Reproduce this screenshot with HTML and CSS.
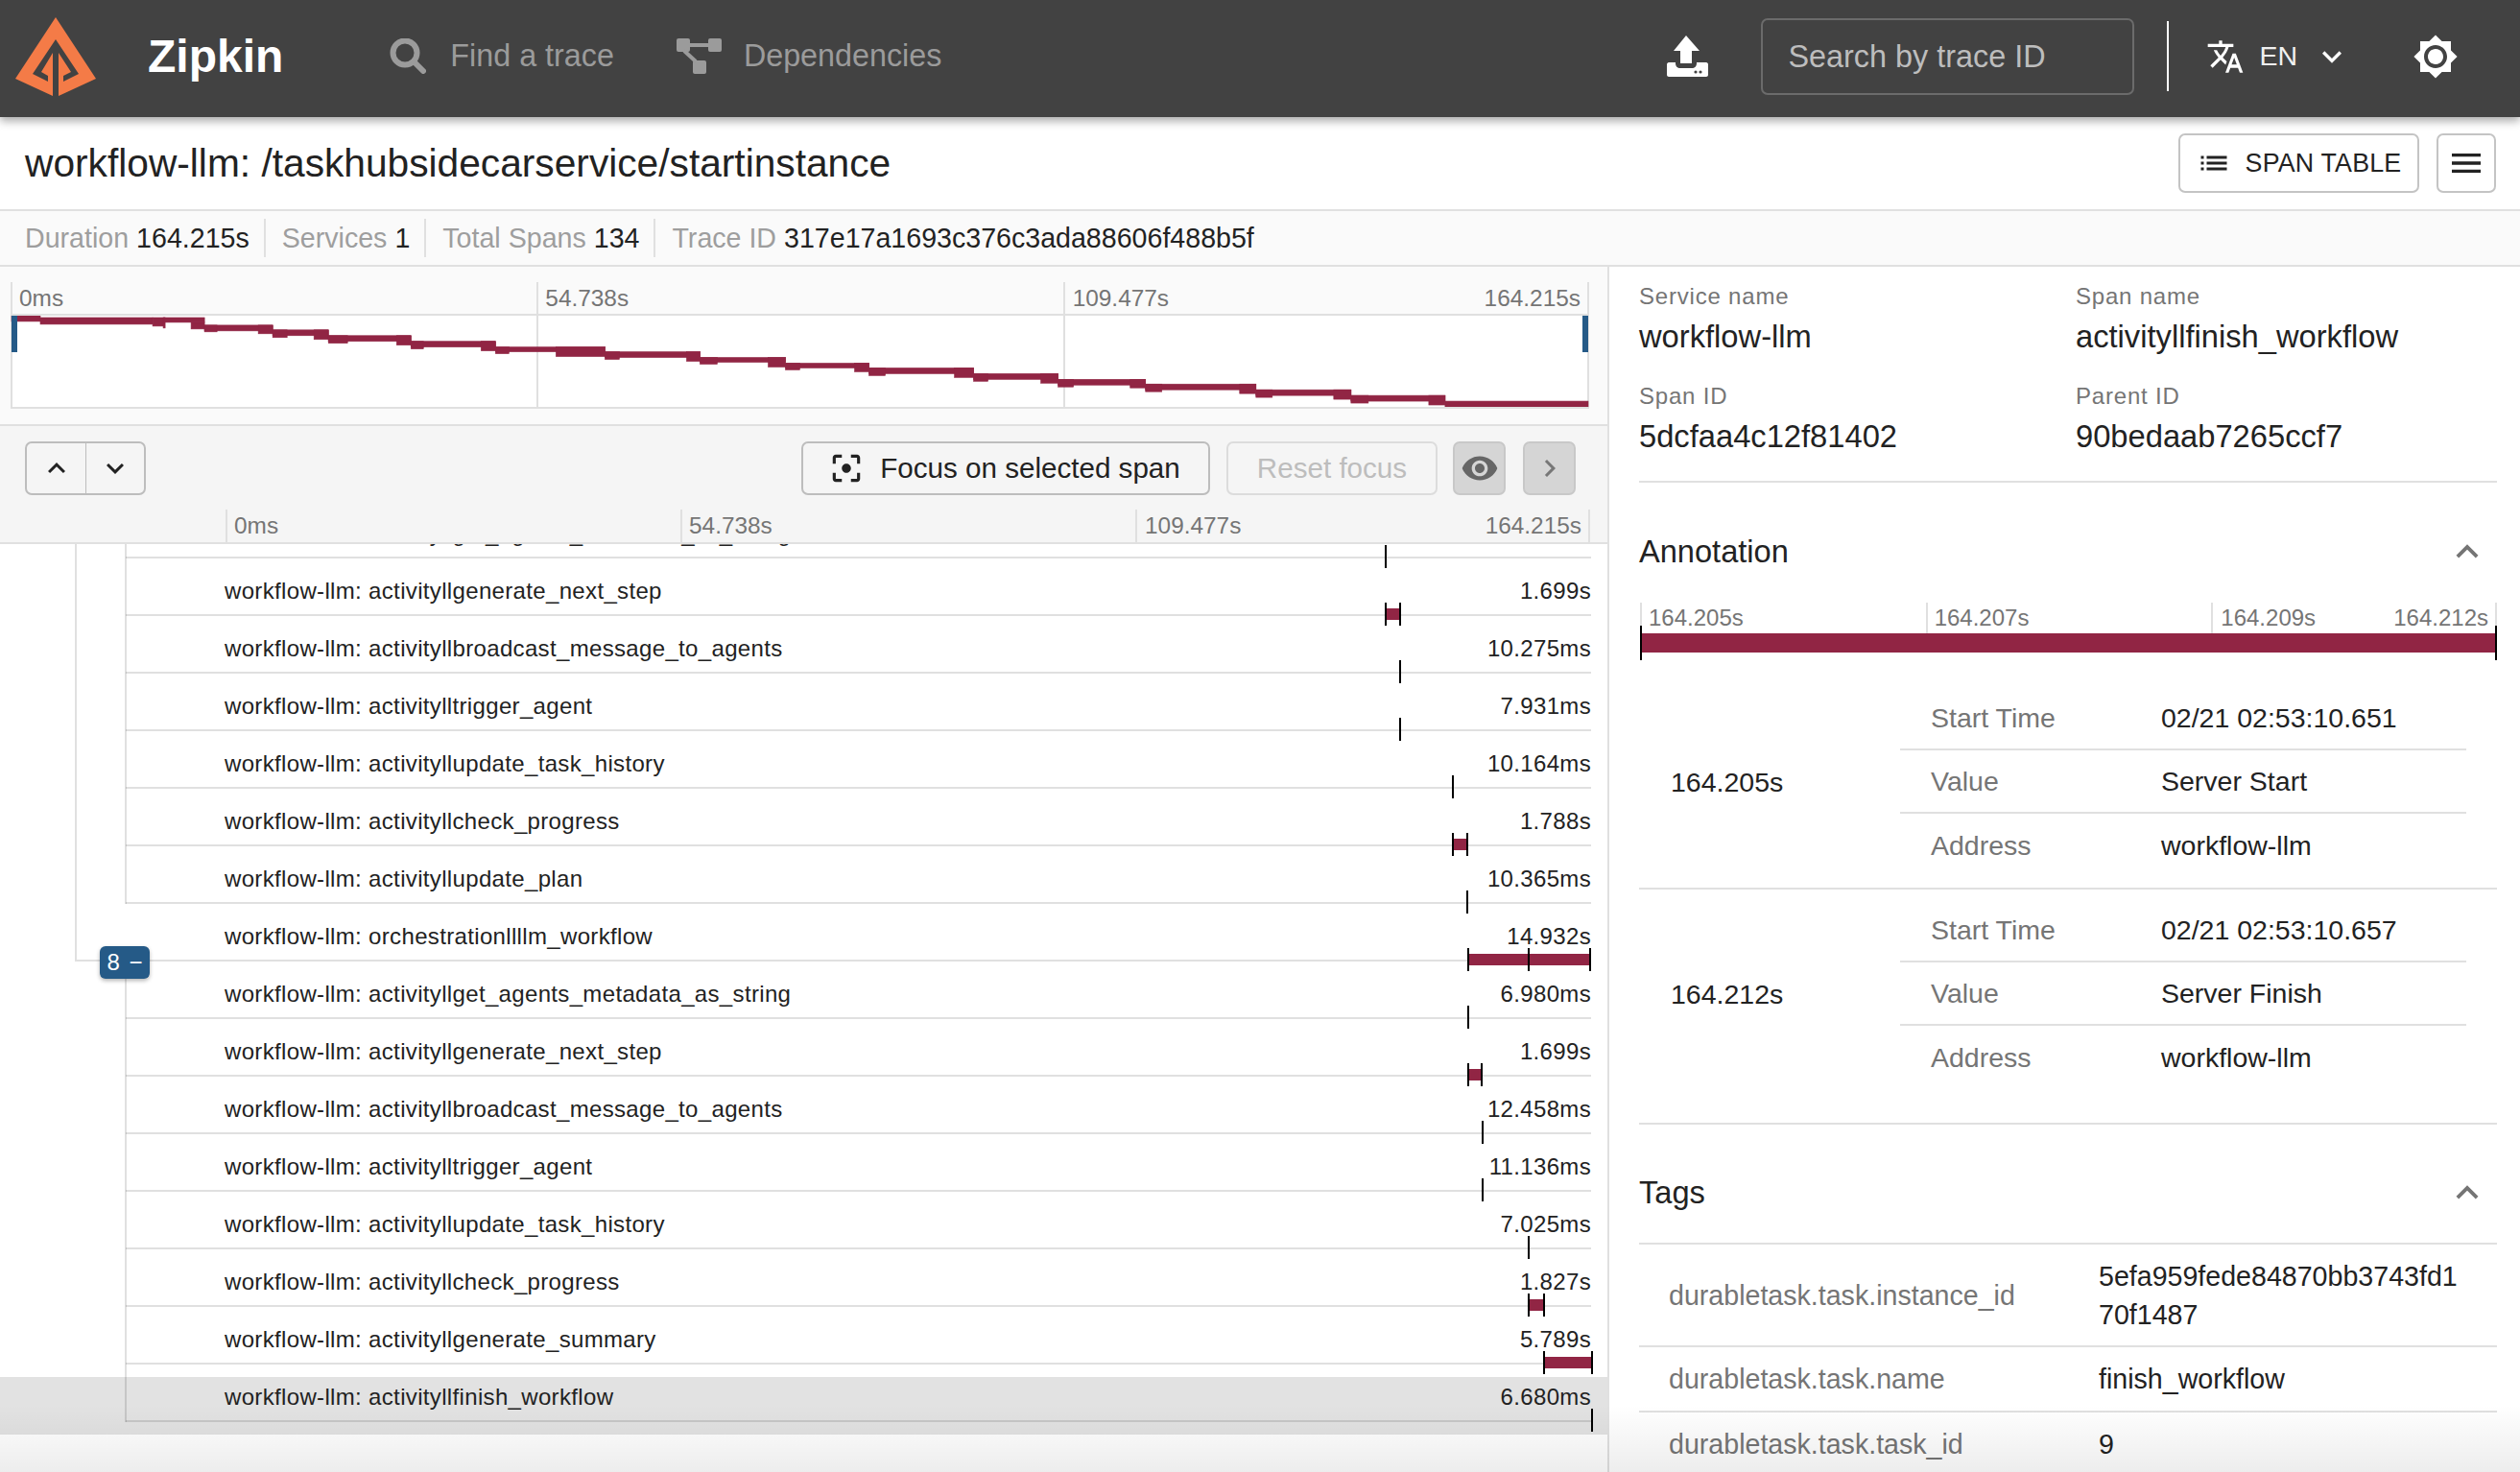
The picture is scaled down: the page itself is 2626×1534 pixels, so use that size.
FILE: index.html
```html
<!DOCTYPE html>
<html lang="en">
<head>
    <meta charset="UTF-8">
    <title>Zipkin</title>
    <link rel="stylesheet" href="styles.css">
</head>
<body>
    <header class="navbar">
        <svg class="logo" viewBox="16 17 84 82"><polygon fill="#f47b47" points="58,17 100,81 61,99 61,54 74,74 66,78 66,84 82,76 58,40 34,76 50,84 50,78 43,74 55,54 55,99 16,81"/></svg>
        <div class="brand">Zipkin</div>
        <a class="nav-link nav-find">
            <svg class="icon-search" viewBox="0 0 38 37"><circle cx="16" cy="15" r="12.5" fill="none" stroke="#9b9b9b" stroke-width="6"/><line x1="25" y1="24" x2="35" y2="34" stroke="#9b9b9b" stroke-width="6" stroke-linecap="round"/></svg>
            <span>Find a trace</span>
        </a>
        <a class="nav-link nav-deps">
            <svg class="icon-deps" viewBox="0 0 48 37"><rect x="1" y="0" width="14" height="14" rx="2" fill="#9b9b9b"/><rect x="34" y="0" width="14" height="14" rx="2" fill="#9b9b9b"/><rect x="18" y="23" width="14" height="14" rx="2" fill="#9b9b9b"/><line x1="14" y1="7" x2="35" y2="7" stroke="#9b9b9b" stroke-width="4"/><line x1="9" y1="13" x2="21" y2="24" stroke="#9b9b9b" stroke-width="4"/></svg>
            <span>Dependencies</span>
        </a>
        <div class="nav-spacer"></div>
        <svg class="icon-upload" viewBox="0 0 43 43"><path fill="#fff" d="M20 0 L34 16 H26 V29 H14 V16 H7 Z"/><path fill="#fff" d="M2 28 H9 V29 C9 32 11 34 14 34 H26 C29 34 31 32 31 29 V28 H41 C42 28 43 29 43 30 V41 C43 42 42 43 41 43 H2 C1 43 0 42 0 41 V30 C0 29 1 28 2 28 Z"/><circle cx="30" cy="38" r="1.6" fill="#424242"/><circle cx="35" cy="38" r="1.6" fill="#424242"/></svg>
        <div class="search-box">Search by trace ID</div>
        <div class="nav-divider"></div>
        <svg class="icon-translate" viewBox="0 0 24 24"><path fill="#fff" d="M12.87 15.07l-2.54-2.51.03-.03c1.74-1.94 2.98-4.17 3.71-6.53H17V4h-7V2H8v2H1v1.99h11.17C11.5 7.92 10.44 9.75 9 11.35 8.07 10.32 7.3 9.19 6.69 8h-2c.73 1.63 1.73 3.17 2.98 4.56l-5.09 5.02L4 19l5-5 3.11 3.11.76-2.04zM18.5 10h-2L12 22h2l1.12-3h4.75L21 22h2l-4.5-12zm-2.62 7l1.62-4.33L19.12 17h-3.24z"/></svg>
        <span class="lang">EN</span>
        <svg class="icon-lang-more" viewBox="0 0 24 24"><path fill="#fff" d="M16.59 8.59L12 13.17 7.41 8.59 6 10l6 6 6-6z"/></svg>
        <svg class="icon-theme" viewBox="0 0 24 24"><path fill="#fff" d="M20 8.69V4h-4.69L12 .69 8.69 4H4v4.69L.69 12 4 15.31V20h4.69L12 23.31 15.31 20H20v-4.69L23.31 12 20 8.69zM12 18c-3.31 0-6-2.69-6-6s2.69-6 6-6 6 2.69 6 6-2.69 6-6 6zm0-10c-2.21 0-4 1.79-4 4s1.79 4 4 4 4-1.79 4-4-1.79-4-4-4z"/></svg>
    </header>

    <div class="title-row">
        <h1 class="trace-title">workflow-llm: /taskhubsidecarservice/startinstance</h1>
        <button class="btn btn-table">
            <svg class="icon-list" viewBox="0 0 24 24"><path fill="#222" d="M3 13h2v-2H3v2zm0 4h2v-2H3v2zm0-8h2V7H3v2zm4 4h14v-2H7v2zm0 4h14v-2H7v2zM7 7v2h14V7H7z"/></svg>
            SPAN TABLE
        </button>
        <button class="btn btn-menu">
            <svg class="icon-menu" viewBox="0 0 24 24"><path fill="#222" d="M3 18h18v-2H3v2zm0-5h18v-2H3v2zm0-7v2h18V6H3z"/></svg>
        </button>
    </div>

    <div class="info-row">
        <div class="info-item"><span class="info-label">Duration</span> 164.215s</div>
        <div class="info-item"><span class="info-label">Services</span> 1</div>
        <div class="info-item"><span class="info-label">Total Spans</span> 134</div>
        <div class="info-item"><span class="info-label">Trace ID</span> 317e17a1693c376c3ada88606f488b5f</div>
    </div>

    <main class="main">
        <section class="left-panel">
            <div class="minimap-wrap">
                <div class="minimap">
                    <div class="ticks mini-labels">
                        <div class="tick-cell">0ms</div>
                        <div class="tick-cell">54.738s</div>
                        <div class="tick-cell tick-last"><span>109.477s</span><span>164.215s</span></div>
                    </div>
                    <div class="mini-plot">
                        <div class="ticks mini-ticks">
                            <div class="tick-cell"></div>
                            <div class="tick-cell"></div>
                            <div class="tick-cell tick-last"></div>
                        </div>
                        <svg class="mini-spans" viewBox="12 328 1644 96" preserveAspectRatio="none">
                            <g fill="#912544" stroke="#912544" stroke-width="0.6">
                                <rect x="13" y="328" width="30" height="6"/>
                                <rect x="43" y="330" width="117" height="7"/>
                                <rect x="160" y="330" width="12" height="9"/>
                                <rect x="171" y="330" width="2" height="11"/>
                                <rect x="172" y="330" width="42" height="5"/>
                                <rect x="200" y="335" width="14" height="7"/>
                                <rect x="214" y="338" width="71" height="6"/>
                                <rect x="214" y="338" width="13" height="7"/>
                                <rect x="270" y="338" width="15" height="9"/>
                                <rect x="285" y="343" width="58" height="6"/>
                                <rect x="285" y="343" width="15" height="8"/>
                                <rect x="328" y="343" width="15" height="10"/>
                                <rect x="343" y="349" width="86" height="6"/>
                                <rect x="343" y="349" width="20" height="8"/>
                                <rect x="414" y="349" width="15" height="10"/>
                                <rect x="429" y="355" width="88" height="6"/>
                                <rect x="429" y="355" width="13" height="8"/>
                                <rect x="502" y="355" width="15" height="10"/>
                                <rect x="517" y="361" width="114" height="5"/>
                                <rect x="517" y="361" width="14" height="7"/>
                                <rect x="580" y="361" width="51" height="10"/>
                                <rect x="631" y="366" width="99" height="6"/>
                                <rect x="631" y="366" width="15" height="8"/>
                                <rect x="716" y="366" width="14" height="10"/>
                                <rect x="730" y="372" width="89" height="5"/>
                                <rect x="730" y="372" width="18" height="7"/>
                                <rect x="801" y="372" width="18" height="10"/>
                                <rect x="819" y="378" width="87" height="5"/>
                                <rect x="819" y="378" width="15" height="7"/>
                                <rect x="891" y="378" width="15" height="9"/>
                                <rect x="906" y="383" width="109" height="6"/>
                                <rect x="906" y="383" width="17" height="8"/>
                                <rect x="995" y="383" width="20" height="10"/>
                                <rect x="1015" y="389" width="88" height="6"/>
                                <rect x="1015" y="389" width="15" height="8"/>
                                <rect x="1085" y="389" width="18" height="10"/>
                                <rect x="1103" y="395" width="91" height="6"/>
                                <rect x="1103" y="395" width="16" height="8"/>
                                <rect x="1178" y="395" width="16" height="9"/>
                                <rect x="1194" y="400" width="115" height="6"/>
                                <rect x="1194" y="400" width="17" height="8"/>
                                <rect x="1292" y="400" width="17" height="10"/>
                                <rect x="1309" y="406" width="99" height="6"/>
                                <rect x="1309" y="406" width="17" height="8"/>
                                <rect x="1390" y="406" width="18" height="10"/>
                                <rect x="1408" y="412" width="98" height="6"/>
                                <rect x="1408" y="412" width="18" height="8"/>
                                <rect x="1489" y="412" width="17" height="10"/>
                                <rect x="1506" y="418" width="149" height="6"/>
                            </g>
                        </svg>
                        <div class="mini-handle mini-handle-left"></div>
                        <div class="mini-handle mini-handle-right"></div>
                    </div>
                </div>
            </div>

            <div class="toolbar">
                <div class="arrow-group">
                    <button class="arrow-btn"><svg viewBox="0 0 24 24"><path fill="#222" d="M12 8l-6 6 1.41 1.41L12 10.83l4.59 4.58L18 14z"/></svg></button>
                    <button class="arrow-btn"><svg viewBox="0 0 24 24"><path fill="#222" d="M16.59 8.59L12 13.17 7.41 8.59 6 10l6 6 6-6z"/></svg></button>
                </div>
                <div class="toolbar-actions">
                    <button class="btn btn-focus">
                        <svg class="icon-focus" viewBox="0 0 24 24"><path fill="#222" d="M5 15H3v4c0 1.1.9 2 2 2h4v-2H5v-4zM5 5h4V3H5c-1.1 0-2 .9-2 2v4h2V5zm14-2h-4v2h4v4h2V5c0-1.1-.9-2-2-2zm0 16h-4v2h4c1.1 0 2-.9 2-2v-4h-2v4zM12 9c-1.66 0-3 1.34-3 3s1.34 3 3 3 3-1.34 3-3-1.34-3-3-3z"/></svg>
                        Focus on selected span
                    </button>
                    <button class="btn btn-reset">Reset focus</button>
                    <button class="btn btn-square"><svg viewBox="0 0 24 24"><path fill="#666" d="M12 4.5C7 4.5 2.73 7.61 1 12c1.73 4.39 6 7.5 11 7.5s9.27-3.11 11-7.5c-1.73-4.39-6-7.5-11-7.5zM12 17c-2.76 0-5-2.24-5-5s2.24-5 5-5 5 2.24 5 5-2.24 5-5 5zm0-8c-1.66 0-3 1.34-3 3s1.34 3 3 3 3-1.34 3-3-1.34-3-3-3z"/></svg></button>
                    <button class="btn btn-square btn-chev"><svg viewBox="0 0 24 24"><path fill="#777" d="M10 6L8.59 7.41 13.17 12l-4.58 4.59L10 18l6-6z"/></svg></button>
                </div>
            </div>

            <div class="ticks span-ruler">
                <div class="tick-cell">0ms</div>
                <div class="tick-cell">54.738s</div>
                <div class="tick-cell tick-last"><span>109.477s</span><span>164.215s</span></div>
            </div>

            <div class="rows">
                <div class="span-row row-clipped">
                    <div class="row-label"><span>workflow-llm: activityllget_agents_metadata_as_string</span></div>
                    <div class="row-track"><i class="tick" style="left:84.9%"></i></div>
                </div>
                <div class="span-row">
                    <div class="row-label"><span>workflow-llm: activityllgenerate_next_step</span><span>1.699s</span></div>
                    <div class="row-track"><i class="bar" style="left:84.9%;width:1.05%"></i><i class="tick" style="left:84.9%"></i><i class="tick" style="left:85.95%"></i></div>
                </div>
                <div class="span-row">
                    <div class="row-label"><span>workflow-llm: activityllbroadcast_message_to_agents</span><span>10.275ms</span></div>
                    <div class="row-track"><i class="tick" style="left:85.96%"></i></div>
                </div>
                <div class="span-row">
                    <div class="row-label"><span>workflow-llm: activitylltrigger_agent</span><span>7.931ms</span></div>
                    <div class="row-track"><i class="tick" style="left:85.96%"></i></div>
                </div>
                <div class="span-row">
                    <div class="row-label"><span>workflow-llm: activityllupdate_task_history</span><span>10.164ms</span></div>
                    <div class="row-track"><i class="tick" style="left:89.82%"></i></div>
                </div>
                <div class="span-row">
                    <div class="row-label"><span>workflow-llm: activityllcheck_progress</span><span>1.788s</span></div>
                    <div class="row-track"><i class="bar" style="left:89.82%;width:1.05%"></i><i class="tick" style="left:89.82%"></i><i class="tick" style="left:90.87%"></i></div>
                </div>
                <div class="span-row">
                    <div class="row-label"><span>workflow-llm: activityllupdate_plan</span><span>10.365ms</span></div>
                    <div class="row-track"><i class="tick" style="left:90.87%"></i></div>
                </div>
                <div class="span-row">
                    <div class="row-label"><span>workflow-llm: orchestrationllllm_workflow</span><span>14.932s</span></div>
                    <div class="row-track"><i class="bar" style="left:90.94%;width:8.92%"></i><i class="tick" style="left:90.94%"></i><i class="tick" style="left:95.37%"></i><i class="tick" style="left:99.86%"></i></div>
                </div>
                <div class="span-row">
                    <div class="row-label"><span>workflow-llm: activityllget_agents_metadata_as_string</span><span>6.980ms</span></div>
                    <div class="row-track"><i class="tick" style="left:90.94%"></i></div>
                </div>
                <div class="span-row">
                    <div class="row-label"><span>workflow-llm: activityllgenerate_next_step</span><span>1.699s</span></div>
                    <div class="row-track"><i class="bar" style="left:90.94%;width:.98%"></i><i class="tick" style="left:90.94%"></i><i class="tick" style="left:91.92%"></i></div>
                </div>
                <div class="span-row">
                    <div class="row-label"><span>workflow-llm: activityllbroadcast_message_to_agents</span><span>12.458ms</span></div>
                    <div class="row-track"><i class="tick" style="left:91.99%"></i></div>
                </div>
                <div class="span-row">
                    <div class="row-label"><span>workflow-llm: activitylltrigger_agent</span><span>11.136ms</span></div>
                    <div class="row-track"><i class="tick" style="left:91.99%"></i></div>
                </div>
                <div class="span-row">
                    <div class="row-label"><span>workflow-llm: activityllupdate_task_history</span><span>7.025ms</span></div>
                    <div class="row-track"><i class="tick" style="left:95.37%"></i></div>
                </div>
                <div class="span-row">
                    <div class="row-label"><span>workflow-llm: activityllcheck_progress</span><span>1.827s</span></div>
                    <div class="row-track"><i class="bar" style="left:95.37%;width:1.12%"></i><i class="tick" style="left:95.37%"></i><i class="tick" style="left:96.49%"></i></div>
                </div>
                <div class="span-row">
                    <div class="row-label"><span>workflow-llm: activityllgenerate_summary</span><span>5.789s</span></div>
                    <div class="row-track"><i class="bar" style="left:96.49%;width:3.51%"></i><i class="tick" style="left:96.49%"></i><i class="tick" style="left:100%"></i></div>
                </div>
                <div class="span-row row-selected">
                    <div class="row-label"><span>workflow-llm: activityllfinish_workflow</span><span>6.680ms</span></div>
                    <div class="row-track"><i class="tick" style="left:100%"></i></div>
                </div>

                <div class="tree tree-outer"></div>
                <div class="tree tree-branch"></div>
                <div class="tree tree-upper"></div>
                <div class="tree tree-lower"></div>
                <div class="collapse-badge">8 −</div>
            </div>
        </section>

        <aside class="right-panel">
            <div class="span-meta">
                <div class="meta-item"><div class="meta-label">Service name</div><div class="meta-value">workflow-llm</div></div>
                <div class="meta-item"><div class="meta-label">Span name</div><div class="meta-value">activityllfinish_workflow</div></div>
                <div class="meta-item"><div class="meta-label">Span ID</div><div class="meta-value">5dcfaa4c12f81402</div></div>
                <div class="meta-item"><div class="meta-label">Parent ID</div><div class="meta-value">90bedaab7265ccf7</div></div>
            </div>

            <div class="section annotation">
                <div class="section-head">
                    <span>Annotation</span>
                    <svg class="icon-collapse" viewBox="0 0 24 24"><path fill="#757575" d="M12 8l-6 6 1.41 1.41L12 10.83l4.59 4.58L18 14z"/></svg>
                </div>
                <div class="ann-timeline">
                    <div class="ticks ann-labels">
                        <div class="tick-cell">164.205s</div>
                        <div class="tick-cell">164.207s</div>
                        <div class="tick-cell tick-last"><span>164.209s</span><span>164.212s</span></div>
                    </div>
                    <div class="ann-bar"></div>
                    <i class="ann-end ann-end-left"></i>
                    <i class="ann-end ann-end-right"></i>
                </div>

                <div class="ann-group ann-first">
                    <div class="ann-time">164.205s</div>
                    <div class="ann-table">
                        <div class="ann-row"><span class="ann-key">Start Time</span><span>02/21 02:53:10.651</span></div>
                        <div class="ann-row"><span class="ann-key">Value</span><span>Server Start</span></div>
                        <div class="ann-row"><span class="ann-key">Address</span><span>workflow-llm</span></div>
                    </div>
                </div>
                <div class="ann-group ann-second">
                    <div class="ann-time">164.212s</div>
                    <div class="ann-table">
                        <div class="ann-row"><span class="ann-key">Start Time</span><span>02/21 02:53:10.657</span></div>
                        <div class="ann-row"><span class="ann-key">Value</span><span>Server Finish</span></div>
                        <div class="ann-row"><span class="ann-key">Address</span><span>workflow-llm</span></div>
                    </div>
                </div>
            </div>

            <div class="section tags">
                <div class="section-head tags-head">
                    <span>Tags</span>
                    <svg class="icon-collapse" viewBox="0 0 24 24"><path fill="#757575" d="M12 8l-6 6 1.41 1.41L12 10.83l4.59 4.58L18 14z"/></svg>
                </div>
                <div class="tag-row"><span class="tag-key">durabletask.task.instance_id</span><span class="tag-value">5efa959fede84870bb3743fd170f1487</span></div>
                <div class="tag-row"><span class="tag-key">durabletask.task.name</span><span class="tag-value">finish_workflow</span></div>
                <div class="tag-row"><span class="tag-key">durabletask.task.task_id</span><span class="tag-value">9</span></div>
            </div>
        </aside>
    </main>

    <div class="bottom-fade"></div>
</body>
</html>
```

FILE: styles.css
```css
* {
    margin: 0;
    padding: 0;
    box-sizing: border-box;
}

html, body {
    height: 100%;
    overflow: hidden;
}

body {
    display: flex;
    flex-direction: column;
    position: relative;
    font-family: "Liberation Sans", Arial, sans-serif;
    color: #222;
    background-color: white;
}

svg {
    display: block;
    flex-shrink: 0;
}

/* top bar */
.navbar {
    height: 122px;
    flex-shrink: 0;
    display: flex;
    align-items: center;
    padding-bottom: 5px;
    background-color: #424242;
    box-shadow: 0 4px 9px rgba(0,0,0,0.35);
    position: relative;
    z-index: 2;
}

.logo {
    width: 84px;
    height: 82px;
    margin-left: 16px;
}

.brand {
    margin-left: 54px;
    font-size: 48px;
    font-weight: bold;
    color: white;
}

.nav-link {
    display: flex;
    align-items: center;
    font-size: 32.3px;
    color: #9b9b9b;
}

.nav-find {
    margin-left: 111px;
    gap: 25px;
}

.nav-deps {
    margin-left: 64px;
    gap: 23px;
}

.icon-search {
    width: 38px;
    height: 37px;
}

.icon-deps {
    width: 48px;
    height: 37px;
}

.nav-spacer {
    flex: 1;
}

.icon-upload {
    width: 43px;
    height: 43px;
}

.search-box {
    width: 389px;
    height: 80px;
    margin-left: 55px;
    padding-left: 26px;
    border: 2px solid #6b6b6b;
    border-radius: 7px;
    font-size: 32.4px;
    line-height: 76px;
    color: #bdbdbd;
}

.nav-divider {
    width: 2px;
    height: 73px;
    margin-left: 34px;
    background-color: white;
}

.icon-translate {
    width: 40px;
    height: 40px;
    margin-left: 39px;
}

.lang {
    margin-left: 15px;
    font-size: 28.5px;
    color: #f0f0f0;
}

.icon-lang-more {
    width: 40px;
    height: 40px;
    margin-left: 16px;
}

.icon-theme {
    width: 48px;
    height: 48px;
    margin-left: 64px;
    margin-right: 64px;
}

/* title */
.title-row {
    height: 98px;
    flex-shrink: 0;
    display: flex;
    align-items: center;
    padding: 0 25px 0 26px;
    border-bottom: 2px solid #e0e0e0;
}

.trace-title {
    flex: 1;
    font-size: 40.7px;
    font-weight: normal;
}

.btn {
    display: flex;
    align-items: center;
    justify-content: center;
    height: 62px;
    font-family: inherit;
    color: #222;
    background-color: transparent;
    border: 2px solid #c4c4c4;
    border-radius: 7px;
}

.btn-table {
    width: 251px;
    gap: 15px;
    font-size: 26.8px;
    letter-spacing: 0.2px;
}

.icon-list {
    width: 36px;
    height: 36px;
}

.btn-menu {
    width: 62px;
    margin-left: 18px;
}

.icon-menu {
    width: 40px;
    height: 40px;
}

/* trace info */
.info-row {
    height: 58px;
    flex-shrink: 0;
    display: flex;
    align-items: center;
    padding-left: 26px;
    background-color: #fafafa;
    border-bottom: 2px solid #e0e0e0;
    font-size: 28.6px;
}

.info-item {
    display: flex;
    align-items: center;
    gap: 8px;
    height: 40px;
    padding-right: 15px;
    margin-right: 17px;
    border-right: 2px solid #e0e0e0;
}

.info-item:last-child {
    border-right: none;
}

.info-label {
    color: #9e9e9e;
}

.main {
    flex: 1;
    min-height: 0;
    display: flex;
}

.left-panel {
    width: 1677px;
    flex-shrink: 0;
    display: flex;
    flex-direction: column;
    border-right: 2px solid #e0e0e0;
}

/* shared ruler */
.ticks {
    display: grid;
    grid-template-columns: repeat(3, 1fr);
    font-size: 24.4px;
    color: #757575;
}

.tick-cell {
    padding-left: 7px;
    border-left: 2px solid #e0e0e0;
}

.tick-last {
    display: flex;
    justify-content: space-between;
    padding-left: 8px;
    padding-right: 7px;
    border-right: 2px solid #e0e0e0;
}

/* minimap */
.minimap-wrap {
    height: 166px;
    flex-shrink: 0;
    padding: 16px 19px 0 11px;
    background-color: #fafafa;
    border-bottom: 2px solid #e0e0e0;
}

.minimap {
    height: 132px;
}

.mini-labels {
    height: 35px;
    line-height: 33px;
    border-bottom: 2px solid #e0e0e0;
}

.mini-plot {
    height: 97px;
    position: relative;
    background-color: white;
    border-bottom: 2px solid #e0e0e0;
}

.mini-ticks {
    height: 100%;
}

.mini-spans {
    position: absolute;
    left: 0;
    top: 0;
    width: 100%;
    height: 100%;
}

.mini-handle {
    position: absolute;
    top: 0;
    width: 6px;
    height: 38px;
    background-color: #255a87;
}

.mini-handle-left {
    left: 1px;
}

.mini-handle-right {
    right: 1px;
}

/* toolbar */
.toolbar {
    height: 87px;
    flex-shrink: 0;
    display: flex;
    align-items: flex-start;
    justify-content: space-between;
    padding: 16px 33px 0 26px;
    background-color: #f5f5f5;
}

.arrow-group {
    display: flex;
    height: 56px;
    border: 2px solid #bdbdbd;
    border-radius: 7px;
}

.arrow-btn {
    width: 61px;
    display: flex;
    align-items: center;
    justify-content: center;
    background: none;
    border: none;
}

.arrow-btn + .arrow-btn {
    border-left: 1px solid #bdbdbd;
}

.arrow-btn svg {
    width: 36px;
    height: 36px;
}

.toolbar-actions {
    display: flex;
}

.toolbar-actions .btn {
    height: 56px;
    font-size: 29.6px;
}

.btn-focus {
    width: 426px;
    margin-right: 17px;
    padding-right: 3px;
    gap: 16px;
    border-color: #bdbdbd;
}

.icon-focus {
    width: 38px;
    height: 38px;
}

.btn-reset {
    width: 220px;
    margin-right: 16px;
    color: #bdbdbd;
    border-color: #dcdcdc;
}

.btn-square {
    width: 55px;
    background-color: #d5d5d5;
    border-color: #c8c8c8;
}

.btn-chev {
    margin-left: 18px;
}

.btn-square svg {
    width: 40px;
    height: 40px;
}

.btn-chev svg {
    width: 36px;
    height: 36px;
}

.span-ruler {
    height: 34px;
    flex-shrink: 0;
    padding: 0 18px 0 235px;
    line-height: 33px;
    background-color: #f5f5f5;
    border-bottom: 2px solid #e0e0e0;
    box-sizing: content-box;
}

/* span rows */
.rows {
    flex: 1;
    min-height: 0;
    position: relative;
    overflow: hidden;
    background-color: white;
}

.span-row {
    height: 60px;
    position: relative;
    font-size: 24px;
    letter-spacing: 0.34px;
}

.row-clipped {
    margin-top: -32px;
}

.row-selected {
    background-color: #e2e2e2;
}

.row-label {
    height: 47px;
    display: flex;
    justify-content: space-between;
    align-items: center;
    margin: 0 17px 0 131px;
    padding: 0 0 3px 103px;
    border-bottom: 2px solid rgba(0,0,0,0.12);
}

.row-track {
    position: absolute;
    left: 235px;
    right: 16px;
    top: 33px;
    height: 24px;
}

.bar {
    position: absolute;
    top: 6px;
    height: 12px;
    background-color: #912544;
}

.tick {
    position: absolute;
    top: 0;
    width: 2px;
    height: 24px;
    margin-left: -1px;
    background-color: black;
}

.tree {
    position: absolute;
    background-color: rgba(0,0,0,0.12);
}

.tree-outer {
    left: 78px;
    top: 0;
    width: 2px;
    height: 433px;
}

.tree-branch {
    left: 78px;
    top: 433px;
    width: 53px;
    height: 2px;
}

.tree-upper {
    left: 130px;
    top: 0;
    width: 2px;
    height: 375px;
}

.tree-lower {
    left: 130px;
    top: 435px;
    width: 2px;
    height: 480px;
}

.collapse-badge {
    position: absolute;
    left: 104px;
    top: 419px;
    width: 52px;
    height: 34px;
    border-radius: 6px;
    background-color: #255a87;
    box-shadow: 0 2px 4px rgba(0,0,0,0.3);
    color: white;
    font-size: 24px;
    line-height: 34px;
    word-spacing: 3px;
    text-align: center;
}

/* details on the right */
.right-panel {
    flex: 1;
    min-width: 0;
    padding: 14px 24px 0 31px;
    overflow: hidden;
}

.span-meta {
    display: grid;
    grid-template-columns: 455px 1fr;
    align-content: start;
    row-gap: 23px;
    height: 211px;
    border-bottom: 2px solid #e0e0e0;
}

.meta-label {
    height: 34px;
    line-height: 34px;
    font-size: 24px;
    letter-spacing: 0.8px;
    color: #757575;
}

.meta-value {
    height: 44px;
    margin-top: 3px;
    line-height: 44px;
    font-size: 32.7px;
}

.section-head {
    height: 125px;
    padding: 18px 8px 0 0;
    display: flex;
    align-items: center;
    justify-content: space-between;
    font-size: 32.6px;
}

.icon-collapse {
    width: 46px;
    height: 46px;
}

.annotation {
    height: 669px;
    border-bottom: 2px solid #e0e0e0;
}

.ann-timeline {
    position: relative;
    height: 60px;
    margin-left: 1px;
}

.ann-labels {
    height: 32px;
    font-size: 24px;
    line-height: 32px;
}

.ann-bar {
    height: 20px;
    background-color: #912544;
}

.ann-end {
    position: absolute;
    top: 24px;
    width: 2px;
    height: 36px;
    background-color: black;
}

.ann-end-left {
    left: 0;
}

.ann-end-right {
    right: 0;
}

.ann-group {
    display: flex;
    align-items: center;
    font-size: 28.5px;
}

.ann-first {
    margin-top: 28px;
    padding-bottom: 11px;
    border-bottom: 2px solid #e0e0e0;
}

.ann-second {
    padding-top: 10px;
}

.ann-time {
    width: 272px;
    padding-left: 33px;
}

.ann-table {
    width: 590px;
}

.ann-row {
    display: flex;
    align-items: center;
    height: 66px;
    padding-left: 32px;
    border-bottom: 2px solid #e0e0e0;
}

.ann-row:last-child {
    border-bottom: none;
}

.ann-key {
    width: 240px;
    color: #757575;
}

.tags-head {
    border-bottom: 2px solid #e0e0e0;
}

.tag-row {
    display: flex;
    align-items: center;
    min-height: 66px;
    padding: 14px 0 12px 31px;
    border-bottom: 2px solid #e0e0e0;
    font-size: 28.6px;
    line-height: 39.5px;
}

.tag-key {
    width: 448px;
    color: #757575;
}

.tag-value {
    width: 385px;
    word-break: break-all;
}

.bottom-fade {
    position: absolute;
    left: 0;
    right: 0;
    bottom: 0;
    height: 70px;
    background: linear-gradient(rgba(0,0,0,0), rgba(0,0,0,0.07));
    pointer-events: none;
    z-index: 3;
}
```
